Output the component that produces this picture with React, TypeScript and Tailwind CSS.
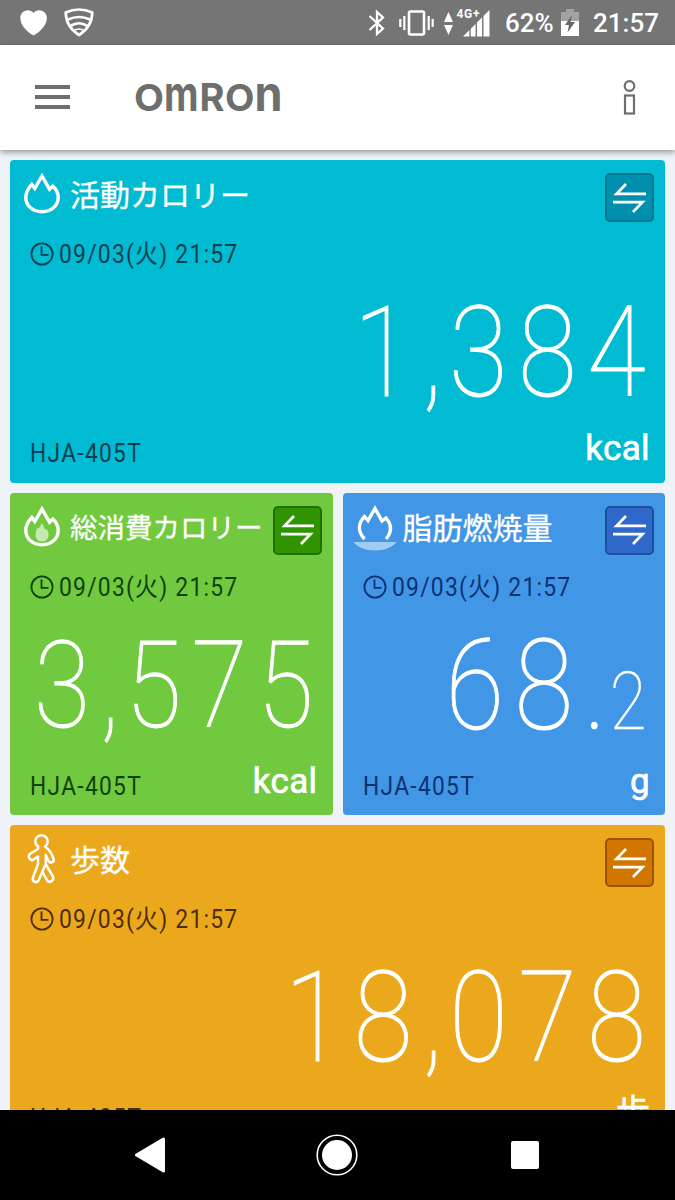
import React from "react";
import { clsx } from "clsx";

const FLAME = "M18 4 L10.8 16.5 L7.8 12.5 C4 16.5 1.8 20.5 1.8 25.5 C1.8 34 9 39.7 18 39.7 S34.2 34 34.2 25.500 C34.200 20.500 32.500 17.500 28.800 14 L25.500 17.200 Z";

function Flame() {
  return (
    <svg width="36" height="43" viewBox="0 0 36 43" fill="none" stroke="white" strokeWidth="3.4" className="ml-[14px] mt-[12px]">
      <path d={FLAME} />
    </svg>
  );
}

function FlameCore() {
  return (
    <svg width="36" height="43" viewBox="0 0 36 43" fill="none" stroke="white" strokeWidth="3.4" className="ml-[14px] mt-[12px]">
      <path d={FLAME} />
      <path d="M18 18 L14.8 23.5 L13.600 22.500 Q11.400 26.500 11.400 30 A6.600 6.600 0 0 0 24.600 30 Q24.600 26.500 22.800 24 L21.200 25 Z" fill="white" fillOpacity="0.6" stroke="none" />
    </svg>
  );
}

function FlameDish() {
  return (
    <svg width="44" height="47" viewBox="0 0 44 47" fill="none" className="ml-[10px] mt-[11px]">
      <path d="M11.500 35 C4.500 27.500 5 19.500 11.500 12.500 L15 16.500 L22 4.500 L29 17 L33 14 C39 21 39 28 33 35" stroke="white" strokeWidth="3.400" />
      <path d="M0.500 38 H43.500 C39 43.500 32 46.500 22 46.500 S5 43.500 0.500 38Z" fill="white" fillOpacity="0.5" />
    </svg>
  );
}

function Walker() {
  return (
    <svg width="30" height="52" viewBox="0 0 30 52" fill="none" stroke="white" strokeWidth="2.5" strokeLinejoin="round" strokeLinecap="round" className="ml-[17px] mt-[8px]">
      <path d="M11 13.500 A6.200 6.200 0 1 1 18 13.500 C22 16.500 25.500 22 26.700 26.500 C27 29.500 23 30.500 21.500 28 L18.800 22 V31.500 L26 43.500 C27.500 47.500 22.500 50.500 20.200 47.500 L15.500 39" />
      <path d="M11 13.500 V16 L3.500 20.500 C1 22.500 1.500 24.500 3 26 L5 27.500 L11 23.500 V31 L6 44.500 C4.500 49 10 51 12 46.500 L17.800 33" />
    </svg>
  );
}

function Swap() {
  return (
    <svg width="33" height="30" viewBox="0 0 33 30" fill="none" stroke="white" strokeWidth="2.7" className="shrink-0">
      <path d="M33 10.800 H3.500 L13 1" />
      <path d="M0 19.200 H29.500 L20 29" />
    </svg>
  );
}

function Clock() {
  return (
    <svg width="24" height="24" viewBox="0 0 24 24" fill="none" stroke="currentColor" strokeWidth="1.8">
      <circle cx="12" cy="12" r="10.600" />
      <path d="M11.500 4.500 V12.800 H18.500" />
    </svg>
  );
}

function StatusBar() {
  return (
    <div className="flex h-[45px] shrink-0 items-center bg-[#757575] font-['Roboto',sans-serif] text-white">
      <svg width="27" height="26" viewBox="0 0 27 26" fill="white" className="ml-5">
        <path d="M13.500 25.500 C11 24.500 0.300 17 0.300 8 C0.300 0.500 9.500 -2.500 13.500 3 C17.500 -2.500 26.900 0.500 26.900 8 C26.900 17 16 24.500 13.500 25.500Z" />
      </svg>
      <svg width="30" height="29" viewBox="0 0 30 29" fill="none" stroke="white" strokeWidth="2.700" className="ml-[17px]">
        <path d="M1.700 4.500 Q15 -1.500 28.300 4.500 Q28 19 15 27 Q2 19 1.700 4.500Z" />
        <path d="M4 11.500 Q15 6.500 26 11.500 M6.500 18 Q15 12.500 23.500 18" />
        <path d="M10 22.500 Q15 19.500 20 22.500 L15 27Z" strokeWidth="1.600" />
      </svg>
      <svg width="18" height="28" viewBox="0 0 18 28" fill="none" stroke="white" strokeWidth="2.300" className="ml-[274px]">
        <path d="M1.500 7 L15 19.500 L9 25 V3 L15 8.500 L1.500 21" />
      </svg>
      <svg width="35" height="26" viewBox="0 0 35 26" fill="none" stroke="white" strokeWidth="2.200" className="ml-[13px]">
        <rect x="10" y="1.500" width="15" height="23" rx="1.500" strokeWidth="2.600" />
        <path d="M1.300 9 V17 M5.300 6 V20 M29.700 6 V20 M33.700 9 V17" />
      </svg>
      <svg width="48" height="30" viewBox="0 0 48 30" fill="white" className="ml-[9px]">
        <path d="M1 14 L5.500 4 L10 14Z M1 17 H10 L5.500 27Z" />
        <path d="M20 28.500 L46.500 2 V28.500Z" />
        <path d="M27 20 V29 M33.300 13 V29 M39.800 7 V29" stroke="#757575" strokeWidth="1.400" />
        <path d="M12 0 H37 V8 L32 13 H12Z" fill="#757575" />
        <text x="13.500" y="10" fontSize="12" fontWeight="700" fontFamily="Roboto" textLength="23">4G+</text>
      </svg>
      <span className="ml-[14px] w-[49px] text-[26px] font-medium leading-none">62%</span>
      <svg width="18" height="27" viewBox="0 0 18 27" className="ml-[7px]">
        <path d="M0 3 H5 V0 H13 V3 H18 V12 H0Z" fill="#a3a3a3" />
        <path d="M0 12 H18 V27 H0Z" fill="white" />
        <path d="M11 6 L4 16 H8 L6.500 23.500 L14 13 H9.500Z" fill="#666" />
      </svg>
      <span className="ml-[14px] text-[26px] font-medium leading-none">21:57</span>
    </div>
  );
}

function AppBar() {
  return (
    <div className="relative z-10 flex h-[105px] shrink-0 items-center bg-white text-[#6e6e6e] shadow-[0_2px_6px_rgba(0,0,0,0.4)]">
      <div className="mb-px ml-[35px] flex flex-col gap-[6.5px]">
        <div className="h-[3.5px] w-[35px] bg-[#6e6e6e]" />
        <div className="h-[3.5px] w-[35px] bg-[#6e6e6e]" />
        <div className="h-[3.5px] w-[35px] bg-[#6e6e6e]" />
      </div>
      <svg width="146" height="44" viewBox="0 -7 146 44" fill="currentColor" fontFamily="Inter" className="ml-[65px] overflow-visible">
        <text transform="translate(-1 28)" fontSize="37.500" fontWeight="700" textLength="30" lengthAdjust="spacingAndGlyphs">O</text>
        <text transform="translate(29 28)" fontSize="49" fontWeight="700" textLength="34.500" lengthAdjust="spacingAndGlyphs">m</text>
        <text transform="translate(64.5 28)" fontSize="38" fontWeight="700" textLength="25" lengthAdjust="spacingAndGlyphs">R</text>
        <text transform="translate(90 28)" fontSize="37.500" fontWeight="700" textLength="29.500" lengthAdjust="spacingAndGlyphs">O</text>
        <text transform="translate(119.500 28)" fontSize="49" fontWeight="700" textLength="28" lengthAdjust="spacingAndGlyphs">n</text>
      </svg>
      <svg width="13" height="35" viewBox="0 0 13 35" fill="none" stroke="currentColor" strokeWidth="2.200" className="ml-auto mr-[39px]">
        <circle cx="6.500" cy="6" r="4.800" />
        <rect x="2" y="15.500" width="9" height="18" />
      </svg>
    </div>
  );
}

type CardProps = {
  title: string;
  titleClass?: string;
  icon: React.ReactNode;
  unit: string;
  unitClass?: string;
  valueClass: string;
  color: string;
  button: string;
  children: React.ReactNode;
};

function Card({ title, titleClass, icon, unit, unitClass, valueClass, color, button, children }: CardProps) {
  return (
    <section className={clsx("flex h-[322.5px] flex-col rounded-[4px] font-['Roboto','Noto_Sans_CJK_JP',sans-serif]", color)}>
      <div className="flex h-[82px] shrink-0 items-start">
        <div className="w-[60px] shrink-0">{icon}</div>
        <h2 className={clsx("mt-[14px] whitespace-nowrap leading-[44px] text-white [-webkit-text-stroke:0.3px_white]", titleClass ?? "text-[30px]")}>{title}</h2>
        <button className={clsx("ml-auto mr-[11px] mt-[13px] flex size-[49px] shrink-0 items-center justify-center rounded-[5px] border-2", button)}>
          <Swap />
        </button>
      </div>
      <div className="ml-5 flex h-6 shrink-0 items-center whitespace-nowrap text-[26px] leading-6">
        <Clock />
        <span className="ml-[5px] origin-left scale-x-[0.88] tracking-[1.4px]">09/03(火) 21:57</span>
      </div>
      <div className="mt-[23px] flex h-[128px] shrink-0 items-baseline justify-end whitespace-nowrap font-thin leading-[128px] text-white">
        <span className={clsx("origin-right scale-x-[0.85] tracking-[0.0975em] [-webkit-text-stroke:1px_white]", valueClass)}>{children}</span>
      </div>
      <div className="ml-5 mr-[15px] flex items-start justify-between whitespace-nowrap">
        <span className="mt-[8px] origin-left scale-x-[0.89] text-[25.5px] leading-[56px] tracking-[1.5px]">HJA-405T</span>
        <span className={clsx("leading-[56px] text-white", unitClass ?? "mt-[4px] text-[35px] tracking-[0.4px] [-webkit-text-stroke:0.7px_white]")}>{unit}</span>
      </div>
    </section>
  );
}

// The separator sits tighter than the digits around it
function Comma() {
  return <span className="tracking-[0.06em]">,</span>;
}

function NavBar() {
  return (
    <div className="relative z-10 flex h-[90px] shrink-0 items-center bg-black">
      <svg width="30" height="36" viewBox="0 0 30 36" fill="white" stroke="white" strokeWidth="3" strokeLinejoin="round" className="ml-[135px]">
        <path d="M1.500 18 L28.500 2 V34Z" />
      </svg>
      <svg width="42" height="42" viewBox="0 0 42 42" className="ml-[151px]">
        <circle cx="21" cy="21" r="19.800" fill="none" stroke="white" strokeWidth="1.600" />
        <circle cx="21" cy="21" r="15" fill="white" />
      </svg>
      <div className="ml-[153px] size-7 rounded-[2px] bg-white" />
    </div>
  );
}

export default function App() {
  return (
    <div className="flex h-[1200px] w-[675px] flex-col overflow-hidden bg-[#eff2f6]">
      <StatusBar />
      <AppBar />
      <main className="flex min-h-0 flex-1 flex-col gap-[10px] overflow-hidden p-[10px]">
        <Card
          title="活動カロリー"
          icon={<Flame />}
          unit="kcal"
          valueClass="mr-[9px] text-[126px]"
          color="shrink-0 bg-[#00bbd1] text-[#083f50]"
          button="border-[#007490] bg-[#0090ad]"
        >
          1<Comma />384
        </Card>
        <div className="grid shrink-0 grid-cols-2 gap-[10px]">
          <Card
            title="総消費カロリー"
            titleClass="text-[27.5px]"
            icon={<FlameCore />}
            unit="kcal"
            valueClass="mr-[9px] text-[120.5px]"
            color="bg-[#70c93e] text-[#12420c]"
            button="border-[#1f7000] bg-[#2f9400]"
          >
            3<Comma />575
          </Card>
          <Card
            title="脂肪燃焼量"
            icon={<FlameDish />}
            unit="g"
            valueClass="mr-[12px] text-[126px]"
            color="bg-[#4296e6] text-[#0d3270]"
            button="border-[#1d4f9e] bg-[#2f68c8]"
          >
            68<span className="tracking-[0.03em]">.</span><span className="text-[79px] tracking-[7px] [-webkit-text-stroke:0.4px_white]">2</span>
          </Card>
        </div>
        <Card
          title="歩数"
          icon={<Walker />}
          unit="歩"
          unitClass="mt-[2px] text-[34px] [-webkit-text-stroke:0.6px_white]"
          valueClass="mr-[9px] text-[126px]"
          color="shrink-0 bg-[#eba81c] text-[#4d2e08]"
          button="border-[#a05000] bg-[#d17700]"
        >
          18<Comma />078
        </Card>
      </main>
      <NavBar />
    </div>
  );
}
